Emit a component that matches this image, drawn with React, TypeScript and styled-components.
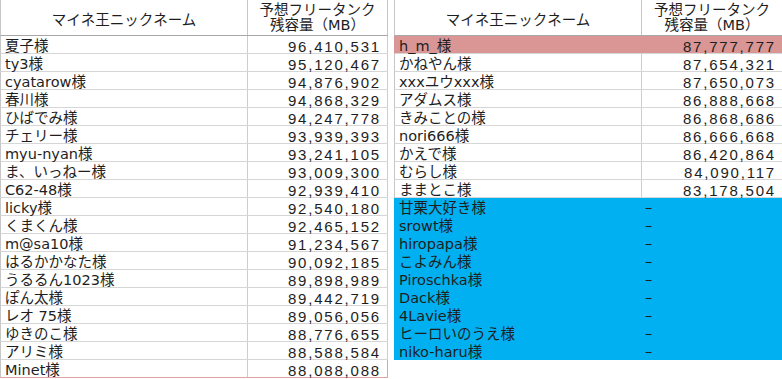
import React from "react";
import styled, { createGlobalStyle, css } from "styled-components";

const GlobalStyle = createGlobalStyle`
  html, body {
    margin: 0;
    padding: 0;
    background: #ffffff;
  }
  body {
    font-family: "DejaVu Sans", "Noto Sans CJK JP", sans-serif;
    color: #1e1e1e;
  }
`;

type Fill = "pink" | "blue";

const fills: Record<Fill, string> = {
  pink: "#da9694",
  blue: "#00b0f0",
};

const Page = styled.div`
  display: flex;
  align-items: flex-start;
  gap: 6px;
  width: 782px;
  height: 379px;
  overflow: hidden;
`;

const Table = styled.div`
  display: flex;
  flex-direction: column;
  width: 388px;
  flex: none;
`;

const HeaderRow = styled.div`
  display: flex;
  height: 36px;
  box-sizing: border-box;
  border-left: 1px solid #c6c6c6;
  border-bottom: 1px solid #a8a8a8;
`;

const HeaderCell = styled.div<{ $wide?: boolean; $edge?: boolean }>`
  display: flex;
  flex-direction: column;
  align-items: center;
  justify-content: center;
  box-sizing: border-box;
  width: ${({ $wide }) => ($wide ? "247px" : "auto")};
  flex: ${({ $wide }) => ($wide ? "none" : "1")};
  border-right: ${({ $wide, $edge }) => ($wide || $edge ? "1px solid #c6c6c6" : "none")};
  font-size: 14.5px;
  line-height: 15px;
  padding-top: ${({ $wide }) => ($wide ? "5px" : "0")};
  white-space: nowrap;
`;

const Row = styled.div<{ $fill?: Fill; $last?: boolean }>`
  display: flex;
  height: 18px;
  box-sizing: border-box;
  border-left: 1px solid ${({ $fill }) => ($fill ? fills[$fill] : "#c6c6c6")};
  background: ${({ $fill }) => ($fill ? fills[$fill] : "transparent")};
  ${({ $fill, $last }) =>
    $fill === "blue"
      ? css`border-bottom: 1px solid ${fills.blue};`
      : $last
      ? css`border-bottom: 1px solid #e2a2a2;`
      : css`border-bottom: 1px solid #d6d6d6;`}
`;

const NameCell = styled.div<{ $fill?: Fill }>`
  width: 247px;
  flex: none;
  box-sizing: border-box;
  padding: 3px 0 0 4px;
  border-right: 1px solid ${({ $fill }) => ($fill ? fills[$fill] : "#cdcdcd")};
  font-size: 14.5px;
  line-height: 15px;
  white-space: nowrap;
  overflow: visible;
`;

const ValueCell = styled.div<{ $edge?: boolean; $dash?: boolean; $last?: boolean }>`
  flex: 1;
  box-sizing: border-box;
  padding: ${({ $dash }) => ($dash ? "2px 0 0 3px" : "3px 6px 0 0")};
  text-align: ${({ $dash }) => ($dash ? "left" : "right")};
  border-right: ${({ $edge, $last }) =>
    $edge ? `1px solid ${$last ? "#e2a2a2" : "#cdcdcd"}` : "none"};
  font-family: ${({ $dash }) => ($dash ? "inherit" : '"Liberation Sans", sans-serif')};
  font-size: ${({ $dash }) => ($dash ? "14.5px" : "15px")};
  line-height: 15px;
  letter-spacing: ${({ $dash }) => ($dash ? "0" : "1.8px")};
  white-space: nowrap;
`;

type Entry = { name: string; value?: string; fill?: Fill };

const leftRows: Entry[] = [
  { name: "夏子様", value: "96,410,531" },
  { name: "ty3様", value: "95,120,467" },
  { name: "cyatarow様", value: "94,876,902" },
  { name: "春川様", value: "94,868,329" },
  { name: "ひばでみ様", value: "94,247,778" },
  { name: "チェリー様", value: "93,939,393" },
  { name: "myu-nyan様", value: "93,241,105" },
  { name: "ま、いっねー様", value: "93,009,300" },
  { name: "C62-48様", value: "92,939,410" },
  { name: "licky様", value: "92,540,180" },
  { name: "くまくん様", value: "92,465,152" },
  { name: "m@sa10様", value: "91,234,567" },
  { name: "はるかかなた様", value: "90,092,185" },
  { name: "うるるん1023様", value: "89,898,989" },
  { name: "ぽん太様", value: "89,442,719" },
  { name: "レオ 75様", value: "89,056,056" },
  { name: "ゆきのこ様", value: "88,776,655" },
  { name: "アリミ様", value: "88,588,584" },
  { name: "Minet様", value: "88,088,088" },
];

const rightRows: Entry[] = [
  { name: "h_m_様", value: "87,777,777", fill: "pink" },
  { name: "かねやん様", value: "87,654,321" },
  { name: "xxxユウxxx様", value: "87,650,073" },
  { name: "アダムス様", value: "86,888,668" },
  { name: "きみことの様", value: "86,868,686" },
  { name: "nori666様", value: "86,666,668" },
  { name: "かえで様", value: "86,420,864" },
  { name: "むらし様", value: "84,090,117" },
  { name: "ままとこ様", value: "83,178,504" },
  { name: "甘栗大好き様", fill: "blue" },
  { name: "srowt様", fill: "blue" },
  { name: "hiropapa様", fill: "blue" },
  { name: "こよみん様", fill: "blue" },
  { name: "Piroschka様", fill: "blue" },
  { name: "Dack様", fill: "blue" },
  { name: "4Lavie様", fill: "blue" },
  { name: "ヒーロいのうえ様", fill: "blue" },
  { name: "niko-haru様", fill: "blue" },
];

const RankTable: React.FC<{ rows: Entry[]; edge?: boolean }> = ({ rows, edge }) => (
  <Table>
    <HeaderRow>
      <HeaderCell $wide>マイネ王ニックネーム</HeaderCell>
      <HeaderCell $edge={edge}>
        <span>予想フリータンク</span>
        <span>残容量（MB）</span>
      </HeaderCell>
    </HeaderRow>
    {rows.map((r, i) => {
      const last = edge && i === rows.length - 1;
      return (
        <Row key={r.name} $fill={r.fill} $last={last}>
          <NameCell $fill={r.fill}>{r.name}</NameCell>
          <ValueCell $edge={edge} $last={last} $dash={!r.value}>
            {r.value ?? "–"}
          </ValueCell>
        </Row>
      );
    })}
  </Table>
);

export default function App() {
  return (
    <>
      <GlobalStyle />
      <Page>
        <RankTable rows={leftRows} edge />
        <RankTable rows={rightRows} />
      </Page>
    </>
  );
}
